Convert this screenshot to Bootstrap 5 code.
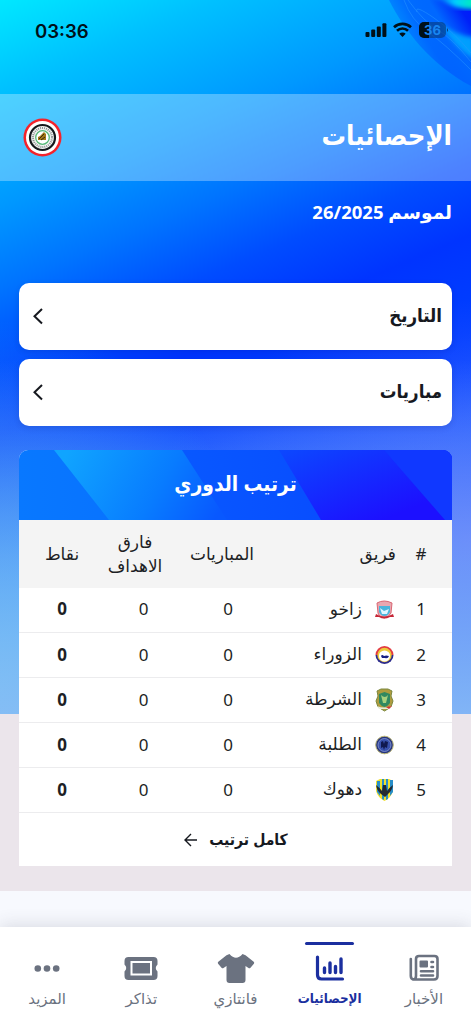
<!DOCTYPE html>
<html lang="ar" dir="rtl">
<head>
    <meta charset="UTF-8">
    <meta name="viewport" content="width=device-width, initial-scale=1.0">
    <title>الإحصائيات</title>
    <link href="https://cdn.jsdelivr.net/npm/bootstrap@5.3.0/dist/css/bootstrap.min.css" rel="stylesheet">
    <style>
        body {
            height: 1024px;
            overflow: hidden;
            background: #f7f9fe;
            color: #16191f;
            font-family: "Noto Sans", "DejaVu Sans Condensed", "DejaVu Sans", sans-serif;
        }
        .stats-page {
            height: 891px;
            background:
                linear-gradient(180deg, rgba(140, 190, 245, 0) 360px, rgba(140, 190, 245, .55) 560px, rgba(140, 190, 245, .9) 714px) 0 0 / 100% 714px no-repeat,
                radial-gradient(ellipse 280px 370px at 0 690px, rgba(80, 215, 240, .75), rgba(80, 215, 240, 0)) 0 0 / 100% 714px no-repeat,
                radial-gradient(ellipse 330px 240px at 100% 540px, rgba(110, 100, 255, .65), rgba(110, 100, 255, 0)) 0 0 / 100% 714px no-repeat,
                linear-gradient(157deg, #00e8ff 0, #00c0ff 85px, #0098ff 190px, #0074ff 265px, #004cff 335px, #0034ff 400px, #0040ff 490px, #0c5cff 590px) 0 0 / 100% 714px no-repeat,
                #ebe5eb;
        }
        .status-bar { height: 94px; direction: ltr; }
        .clock {
            font: 600 18.6px/24px Inter, sans-serif;
            margin: 19px 0 0 35px;
            color: #001018;
        }
        .status-icons { margin: 20px 22px 0 0; }
        .corner-art { position: absolute; top: 0; right: 0; }
        .title-band { height: 87px; background: rgba(255, 255, 255, .3); padding: 0 19px 0 23px; }
        .title-band h1 { font-size: 27.2px; line-height: 40px; margin-bottom: 6px; }
        .season { height: 102px; padding: 17px 19px 0; font-size: 18.5px; line-height: 28px; font-family: "Noto Sans", "DejaVu Sans", sans-serif; }
        .panel { margin: 0 19px; }
        .tiles { gap: 9.5px; }
        .link-tile {
            height: 66.5px;
            border-radius: 10px;
            padding: 0 10px 2px 13px;
            font-size: 18.5px;
            box-shadow: 0 2px 6px rgba(0, 0, 60, .12);
        }
        .link-tile svg { margin-top: 2px; }
        .league { margin-top: 24.5px; height: 415.5px; border-radius: 9px 9px 0 0; }
        .league-head { height: 69.5px; border-radius: 9px 9px 0 0; overflow: hidden; position: relative; }
        .league-head svg { position: absolute; inset: 0; }
        .league-head h2 { position: relative; font-size: 20.8px; line-height: 30px; margin-bottom: 3px; }
        .standings {
            table-layout: fixed;
            font-family: "Noto Sans", "DejaVu Sans", sans-serif;
            font-size: 17px;
            line-height: 24px;
            margin: 0;
            color: #1d1f25;
        }
        .standings > thead th { height: 68px; background: #f4f4f4; font-weight: 400; border: 0; padding: 0; vertical-align: middle; }
        .standings td { height: 45px; padding: 0 0 1px; border-bottom: 1px solid #ececee; vertical-align: middle; text-align: center; }
        .standings .c-rank { width: 56px; padding-right: 6px; }
        .standings .c-team { width: 128px; text-align: right; }
        .standings .c-played { width: 80px; }
        .standings .c-diff { width: 89px; }
        .standings .c-points { padding-left: 6px; }
        .standings th.c-played { padding-right: 12px; }
        .standings th.c-diff { padding-right: 17px; }
        .crest { width: 23px; height: 24px; margin-left: 11px; }
        .full-table { height: 53px; font-size: 15.6px; gap: 12px; }
        .tab-bar {
            height: 97px;
            margin-top: 36px;
            padding: 15px 0 0;
            color: #6b7280;
            font-family: "Noto Sans", "DejaVu Sans", sans-serif;
            font-size: 15px;
            line-height: 20px;
            box-shadow: 0 -2px 16px rgba(60, 60, 80, .16);
        }
        .tab-item { width: 94.2px; border-top: 3px solid transparent; position: relative; }
        .tab-item svg { margin: 8px 0 5px; }
        .tab-item.active { color: #1b2f9f; font-family: "DejaVu Sans Condensed", sans-serif; font-size: 13.3px; line-height: 22px; }
        .tab-line { position: absolute; top: -3px; width: 49px; height: 3px; border-radius: 2px; background: #1b2f9f; }
    </style>
</head>
<body>
    <main class="stats-page">
        <div class="status-bar d-flex justify-content-between align-items-start position-relative">
            <!-- glossy ribbon in the corner -->
            <svg class="corner-art" width="85" height="90" viewBox="0 0 85 90">
                <defs>
                    <linearGradient id="ribbon" x1=".1" y1=".6" x2="1" y2="0">
                        <stop offset="0" stop-color="#0060ff" stop-opacity="0"/>
                        <stop offset=".35" stop-color="#0058ff" stop-opacity=".7"/>
                        <stop offset=".6" stop-color="#0068ff"/>
                        <stop offset=".85" stop-color="#0020f8"/>
                        <stop offset="1" stop-color="#0018ff"/>
                    </linearGradient>
                    <linearGradient id="tipGlow" x1="0" y1="0" x2="1" y2="0">
                        <stop offset="0" stop-color="#00a0ff" stop-opacity="0"/>
                        <stop offset=".6" stop-color="#00d0ff"/>
                        <stop offset="1" stop-color="#00f0b0"/>
                    </linearGradient>
                    <filter id="soft"><feGaussianBlur stdDeviation="2"/></filter>
                </defs>
                <path d="M3 0C18 30 45 65 85 86V0Z" fill="url(#ribbon)"/>
                <path d="M38-4H90V9Q68 10 56 0Z" fill="url(#tipGlow)" filter="url(#soft)"/>
                <path d="M55 24Q70 36 88 37V60Q66 45 55 24Z" fill="#00a8ff" opacity=".9" filter="url(#soft)"/>
                <path d="M18 0Q25 20 42 32T85 70M31 12Q28 4 48 18T85 53M22 0Q38 22 52 30T85 62" fill="none" stroke="#2898ff" stroke-width="1" opacity=".5"/>
            </svg>
            <div class="clock position-relative">03:36</div>
            <svg class="status-icons position-relative" width="84" height="20" viewBox="0 0 84 20">
                <g fill="#001018">
                    <rect x=".5" y="12" width="4" height="5" rx="1"/>
                    <rect x="6.2" y="9.5" width="4" height="7.5" rx="1"/>
                    <rect x="11.8" y="6.5" width="4" height="10.5" rx="1"/>
                    <rect x="17.4" y="3.2" width="4" height="13.8" rx="1"/>
                    <path d="M37.5 17l-3.2-3.2a4.6 4.6 0 0 1 6.4 0z"/>
                </g>
                <path d="M29 8.2a12.4 12.4 0 0 1 17 0M32 11.7a8 8 0 0 1 11 0" fill="none" stroke="#001018" stroke-width="2.6" transform="translate(0 -1)"/>
                <rect x="54" y="2" width="27" height="16" rx="5" fill="#063878" opacity=".6"/>
                <path d="M64 2h-5a5 5 0 0 0-5 5v6a5 5 0 0 0 5 5h5z" fill="#001018"/>
                <path d="M82 8v4q2-2 0-4" fill="#063878"/>
                <text x="67.5" y="14.7" text-anchor="middle" font-family="Inter" font-size="13" font-weight="700" fill="#1885f0">36</text>
            </svg>
        </div>

        <header class="title-band d-flex justify-content-between align-items-center">
            <h1 class="fw-bold text-white">الإحصائيات</h1>
            <svg width="39" height="39" viewBox="0 0 39 39">
                <circle cx="19.5" cy="19.5" r="19" fill="#f4232b"/>
                <circle cx="19.5" cy="19.5" r="16.5" fill="#fff"/>
                <circle cx="19.5" cy="19.5" r="12.5" fill="#f2f4f2" stroke="#15181c" stroke-width="2.2"/>
                <circle cx="19.5" cy="19.5" r="9.5" fill="none" stroke="#8b8f92" stroke-width="2" stroke-dasharray="1 1"/>
                <circle cx="19.5" cy="19.5" r="6.8" fill="#fff" stroke="#55b878" stroke-width="1.3"/>
                <path d="M15 22v-3l2-1 4-4 2 2v6z" fill="#a47716"/>
                <path d="M16 21l5-5M18 22l4-3" stroke="#362a12"/>
            </svg>
        </header>
        <div class="season text-white fw-bold">لموسم <bdi dir="ltr">26/2025</bdi></div>

        <div class="panel d-flex flex-column tiles">
            <a href="#" class="link-tile bg-white text-reset text-decoration-none fw-bold d-flex align-items-center justify-content-between">
                <span>التاريخ</span>
                <svg width="12" height="18" viewBox="0 0 12 18" fill="none" stroke="#16191f" stroke-width="2"><path d="M10 2L2.5 9.2L10 16.5"/></svg>
            </a>
            <a href="#" class="link-tile bg-white text-reset text-decoration-none fw-bold d-flex align-items-center justify-content-between">
                <span>مباريات</span>
                <svg width="12" height="18" viewBox="0 0 12 18" fill="none" stroke="#16191f" stroke-width="2"><path d="M10 2L2.5 9.2L10 16.5"/></svg>
            </a>
        </div>

        <section class="panel league bg-white">
            <div class="league-head d-flex align-items-center justify-content-center">
                <svg width="433" height="70" viewBox="0 0 433 70" preserveAspectRatio="none">
                    <defs>
                        <linearGradient id="bandA"><stop offset="0" stop-color="#0878ff"/><stop offset="1" stop-color="#0862ff"/></linearGradient>
                        <linearGradient id="bandB" gradientUnits="userSpaceOnUse" x1="50" y1="0" x2="190" y2="80"><stop offset="0" stop-color="#10a4ff"/><stop offset=".6" stop-color="#087cff"/><stop offset="1" stop-color="#0858ff"/></linearGradient>
                        <linearGradient id="bandC" x1="0" y1="0" x2="1" y2="0"><stop offset="0" stop-color="#0858ff"/><stop offset="1" stop-color="#0844ff"/></linearGradient>
                        <linearGradient id="bandD" x1="0" y1="0" x2="1" y2="1"><stop offset="0" stop-color="#0c48ff"/><stop offset=".8" stop-color="#1c10ff"/></linearGradient>
                    </defs>
                    <path d="M0 0H433V70H0Z" fill="url(#bandA)"/>
                    <path d="M35 0H433V70H90Z" fill="url(#bandB)"/>
                    <path d="M163 0H433V70H208Z" fill="url(#bandC)"/>
                    <path d="M260 0H433V70H302Z" fill="url(#bandD)"/>
                    <path d="M365 0H433V70H426Z" fill="#1038ff"/>
                </svg>
                <h2 class="fw-bold text-white">ترتيب الدوري</h2>
            </div>
            <table class="table standings">
                <thead>
                    <tr>
                        <th class="c-rank text-center">#</th>
                        <th class="c-team">فريق</th>
                        <th class="c-played text-center">المباريات</th>
                        <th class="c-diff text-center">فارق<br>الاهداف</th>
                        <th class="c-points text-center">نقاط</th>
                    </tr>
                </thead>
                <tbody>
                    <tr>
                        <td class="c-rank">1</td>
                        <td class="c-team"><svg class="crest" viewBox="0 0 23 24"><path d="M4 5Q11 1 19 5L18 15Q16 19 11.5 20Q6 19 5 15Z" fill="#e8a7b0" stroke="#d96673"/><path d="M6 8h11v6q-2 4-5.5 4T6 14z" fill="#49b4dc"/><path d="M7 10l4 3 5-2-2 5H9z" fill="#dff5ff"/><path d="M3 16q8 5 17 0l1 3-4 0q-6 3-11 0l-4 0z" fill="#c62637"/></svg>زاخو</td>
                        <td class="c-played">0</td>
                        <td class="c-diff">0</td>
                        <td class="c-points fw-bold">0</td>
                    </tr>
                    <tr>
                        <td class="c-rank">2</td>
                        <td class="c-team"><svg class="crest" viewBox="0 0 23 24"><path d="M2.5 12a9 9 0 0 1 18 0z" fill="#e33b42"/><path d="M2.5 12a9 9 0 0 0 18 0z" fill="#2b2b8d"/><circle cx="11.5" cy="12" r="7.2" fill="#eccb3b"/><circle cx="11.5" cy="13" r="5.6" fill="#fff"/><path d="M8 13q1-2 3 0 2-1 5 0-1 3-4 2H9z" fill="#172083"/></svg>الزوراء</td>
                        <td class="c-played">0</td>
                        <td class="c-diff">0</td>
                        <td class="c-points fw-bold">0</td>
                    </tr>
                    <tr>
                        <td class="c-rank">3</td>
                        <td class="c-team"><svg class="crest" viewBox="0 0 23 24"><path d="M4 3l4-2h7l4 2-1 5 2 5-2 6-6.5 4L5 19l-2-6 2-5z" fill="#af9c3e" stroke="#7b8840"/><path d="M6 6l5.5-2L17 6v9q-2 3-5.5 4Q8 18 6 15z" fill="#318960"/><path d="M8 7q4 4 7 0l-2 8h-3z" fill="#a8d07d"/><path d="M4 18q7 3 15 0l-2 3H6z" fill="#e8edda"/><path d="M13 19l6-1-3 3z" fill="#cf3434"/></svg>الشرطة</td>
                        <td class="c-played">0</td>
                        <td class="c-diff">0</td>
                        <td class="c-points fw-bold">0</td>
                    </tr>
                    <tr>
                        <td class="c-rank">4</td>
                        <td class="c-team"><svg class="crest" viewBox="0 0 23 24"><circle cx="11.5" cy="12" r="8.8" fill="#26347d" stroke="#bdb773"/><circle cx="11.5" cy="12" r="6.5" fill="#3851ad" stroke="#8c9bd0" stroke-width=".8"/><path d="M8 9l2-1 1 3 1-3 3 1-1 6-2-1-1 3-1-3-2 1z" fill="#10194f"/></svg>الطلبة</td>
                        <td class="c-played">0</td>
                        <td class="c-diff">0</td>
                        <td class="c-points fw-bold">0</td>
                    </tr>
                    <tr>
                        <td class="c-rank">5</td>
                        <td class="c-team"><svg class="crest" viewBox="0 0 23 24"><path d="M3 3l4-2h9l4 2v10q-2 7-8.5 10Q5 20 3 13z" fill="#f0df2b"/><path d="M4 3h3v15l-3-4zM9 1h2v21l-2-1zM13 1h2v20l-2 1zM17 2h3v12l-3 4z" fill="#278ec9"/><path d="M3 7q4 3 6 6l1-6h3l1 6q3-4 6-6-1 6-5 9l-3 3-4-3Q4 13 3 7z" fill="#222a32"/></svg>دهوك</td>
                        <td class="c-played">0</td>
                        <td class="c-diff">0</td>
                        <td class="c-points fw-bold">0</td>
                    </tr>
                </tbody>
            </table>
            <a href="#" class="full-table d-flex justify-content-center align-items-center text-reset text-decoration-none fw-bold">
                <span>كامل ترتيب</span>
                <svg width="14" height="14" viewBox="0 0 14 14" fill="none" stroke="#16191f" stroke-width="1.4"><path d="M14 7H2M8 1L2 7l6 6"/></svg>
            </a>
        </section>
    </main>

    <nav class="tab-bar bg-white d-flex">
        <a class="tab-item d-flex flex-column align-items-center text-decoration-none text-reset">
            <svg width="30" height="30" viewBox="0 0 30 30" fill="none" stroke="#6b7280" stroke-width="2.6" stroke-linecap="round"><path d="M1.800 6v17q0 3.500 3.500 3.500H25q3.500 0 3.500-3.500V6q0-3-3-3H10Q7 3 7 6v17q0 3.500-3 3.500"/><path d="M12 18.200h12M12 22.500h12M22.500 9h1.500M22.500 14h1.500"/><path d="M11.500 8.500h6.500v5h-6.500z" fill="#6b7280" stroke-width="2" stroke-linejoin="round"/></svg>
            <span>الأخبار</span>
        </a>
        <a class="tab-item active d-flex flex-column align-items-center text-decoration-none">
            <span class="tab-line"></span>
            <svg width="30" height="30" viewBox="0 0 30 30" fill="none" stroke="#1b2f9f" stroke-linecap="round"><path d="M2.500 4v18q0 4 4 4h21" stroke-width="3.2"/><path d="M9.500 15v4.500M15 10v9.500M20.500 13.500v6M26 6v13.500" stroke-width="3.4"/></svg>
            <span class="fw-bold">الإحصائيات</span>
        </a>
        <a class="tab-item d-flex flex-column align-items-center text-decoration-none text-reset">
            <svg width="38" height="30" viewBox="0 0 38 30" fill="#6b7280"><path d="M12.500 1Q19 8.500 25.500 1l3 1.200 8.200 6.500q1 1 .2 2l-3.400 4q-1 1-2 .2L28.500 13v14q0 3-3 3h-13q-3 0-3-3V13L6.500 15q-1 .8-2-.3l-3.400-4q-.8-1 .2-2L9.500 2.200z"/></svg>
            <span>فانتازي</span>
        </a>
        <a class="tab-item d-flex flex-column align-items-center text-decoration-none text-reset">
            <svg width="34" height="30" viewBox="0 0 34 30"><path d="M4.500 4h25q4 0 4 4v3.500q-3.500 3.500 0 7V23q0 4-4 4h-25q-4 0-4-4v-4.500q3.500-3.500 0-7V8q0-4 4-4z" fill="#6b7280"/><rect x="7.5" y="9" width="19.5" height="12.5" fill="none" stroke="#fff" stroke-width="2"/></svg>
            <span>تذاكر</span>
        </a>
        <a class="tab-item d-flex flex-column align-items-center text-decoration-none text-reset">
            <svg width="26" height="30" viewBox="0 0 26 30" fill="#6b7280"><circle cx="3.8" cy="15.5" r="3.3"/><circle cx="13" cy="15.5" r="3.3"/><circle cx="22.2" cy="15.5" r="3.3"/></svg>
            <span>المزيد</span>
        </a>
    </nav>

    <script src="https://cdn.jsdelivr.net/npm/bootstrap@5.3.0/dist/js/bootstrap.bundle.min.js"></script>
</body>
</html>
